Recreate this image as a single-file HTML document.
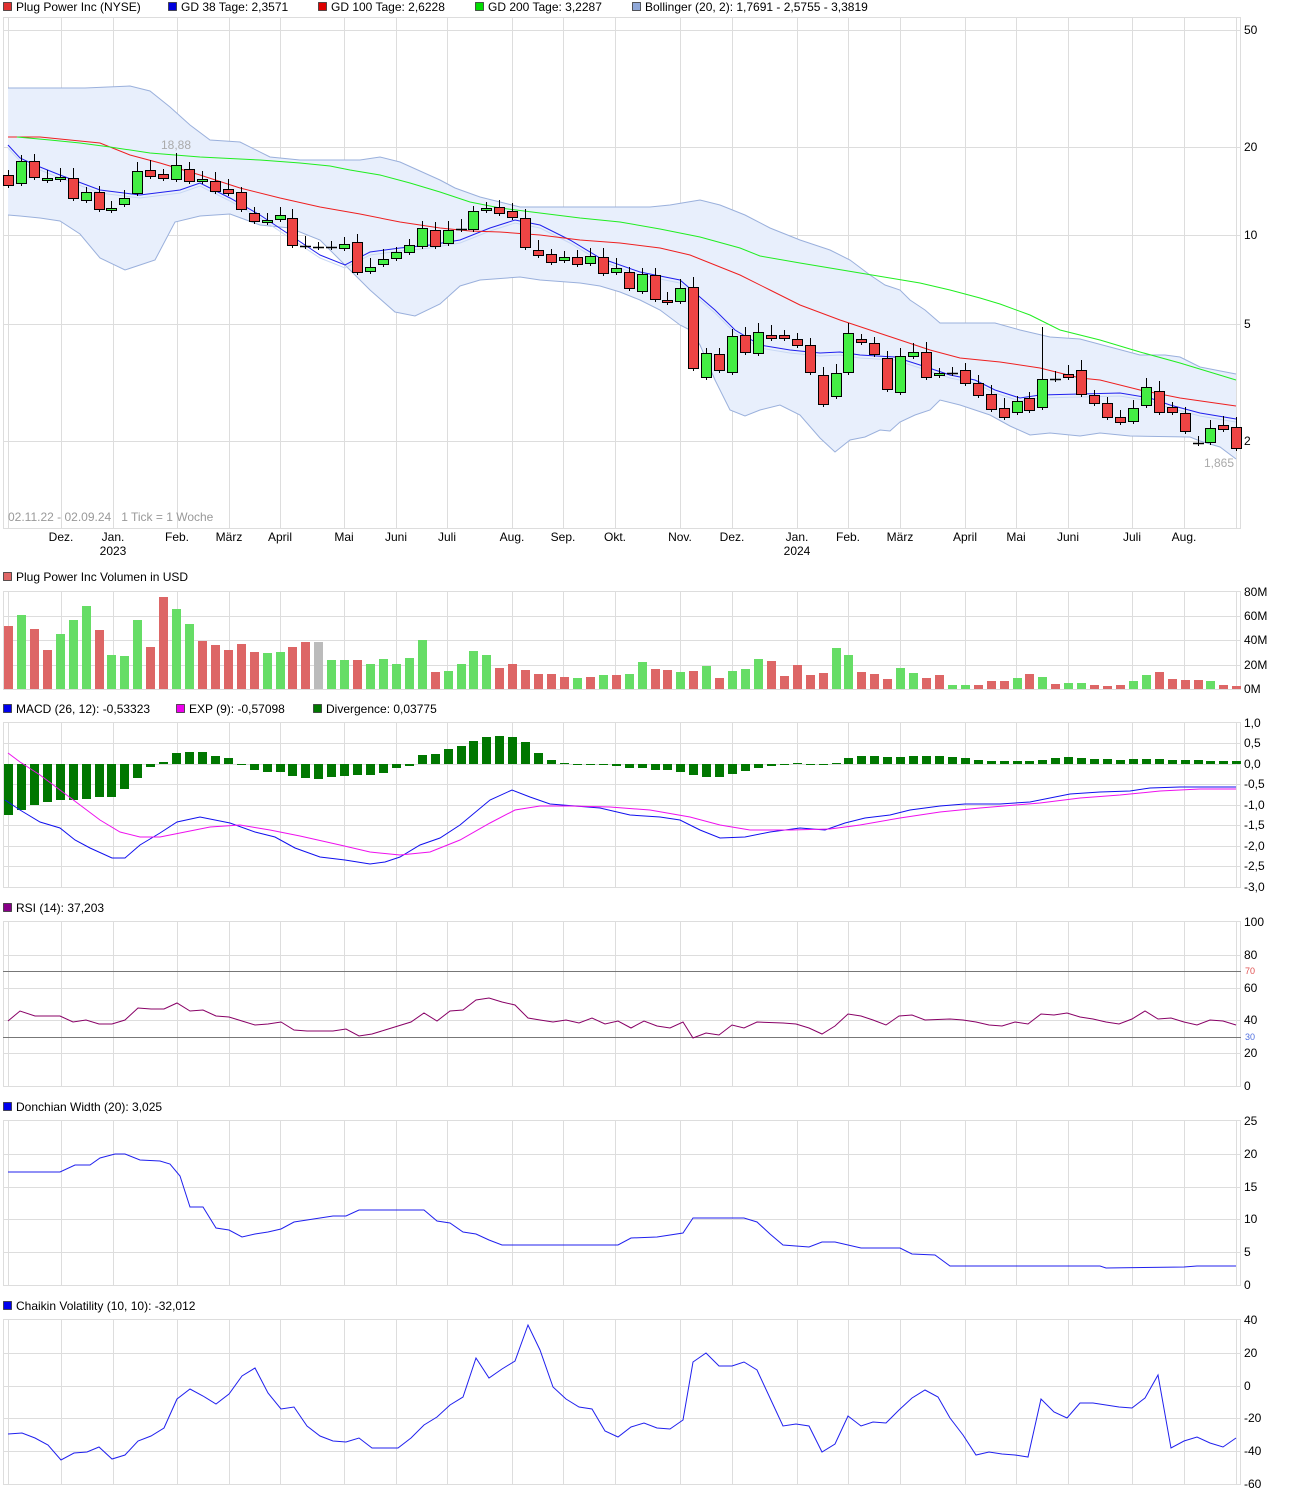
<!DOCTYPE html>
<html><head><meta charset="utf-8"><style>
html,body{margin:0;padding:0;background:#fff}
svg{display:block}
text{font-family:"Liberation Sans",sans-serif;font-size:12px;fill:#000;white-space:pre}
</style></head><body>
<svg id="s" width="1292" height="1498" xmlns="http://www.w3.org/2000/svg"></svg>
<script>
const S=document.getElementById('s');let h='';
const X0=8,DX=12.93;const cx=i=>X0+i*DX;
const vg=[8,61,113,177,229,280,344,396,447,512,563,615,680,732,797,848,900,965,1016,1068,1132,1184,1236];
function panel(y1,y2,hl,labels){
 h+=`<rect x="3.5" y="${y1+.5}" width="1237" height="${y2-y1}" fill="#fff" stroke="#ddd"/>`;
 vg.forEach(x=>h+=`<line x1="${x+.5}" y1="${y1}" x2="${x+.5}" y2="${y2}" stroke="#ddd"/>`);
 hl.forEach(y=>h+=`<line x1="3" y1="${y+.5}" x2="1241" y2="${y+.5}" stroke="#ddd"/>`);
 labels.forEach(([y,t])=>h+=`<text x="1244" y="${y+4}">${t}</text>`);
}
function leg(y,items){let x=3;items.forEach(([c,t,w])=>{h+=`<rect x="${x+.5}" y="${y-8.5}" width="8" height="8" fill="${c}" stroke="#333" stroke-width=".8"/><text x="${x+13}" y="${y}">${t}</text>`;x+=w;});}
function pl(pts,c,w){h+=`<polyline fill="none" stroke="${c}" stroke-width="${w||1}" points="${pts.map(p=>p.join(',')).join(' ')}"/>`;}
// main
leg(11,[["#e03030","Plug Power Inc (NYSE)",165],["#0000dd","GD 38 Tage: 2,3571",150],["#dd0000","GD 100 Tage: 2,6228",157],["#00dd00","GD 200 Tage: 3,2287",157],["#90a8d8","Bollinger (20, 2): 1,7691 - 2,5755 - 3,3819",300]]);
panel(17,528,[30,147,235,324,441],[[30,"50"],[147,"20"],[235,"10"],[324,"5"],[441,"2"]]);
const up=[[8,88],[60,88],[85,88],[130,86],[150,91],[170,107],[190,125],[210,140],[240,142],[270,157],[300,160],[360,160],[380,157],[400,162],[420,171],[440,180],[455,188],[480,197],[520,207],[650,207],[670,205],[700,200],[720,205],[745,215],[770,228],[800,240],[830,250],[850,260],[870,275],[885,285],[900,290],[910,300],[925,310],[940,323],[995,323],[1020,330],[1050,337],[1080,339],[1110,347],[1140,355],[1165,355],[1180,357],[1200,367],[1236,374]];
const lo=[[8,215],[20,216],[40,218],[60,221],[80,234],[100,258],[125,270],[140,265],[155,260],[175,222],[200,216],[230,214],[260,225],[290,228],[320,240],[345,265],[370,290],[395,312],[415,316],[440,304],[460,286],[480,280],[520,277],[540,280],[580,283],[600,286],[620,292],[640,300],[660,310],[680,325],[690,330],[700,345],[715,380],[730,410],[745,416],[760,410],[780,405],[800,415],[820,438],[835,452],[850,440],[865,437],[880,430],[890,431],[900,422],[915,415],[930,410],[940,400],[960,405],[990,415],[1010,426],[1030,435],[1050,433],[1080,436],[1100,433],[1130,436],[1190,437],[1200,441],[1220,447],[1236,459]];
h+=`<polygon fill="#e8effc" points="${up.concat(lo.slice().reverse()).map(p=>p.join(',')).join(' ')}"/>`;
pl(up,"#9ab0dc");pl(lo,"#9ab0dc");
const blue=[[8,145],[20,158],[35,165],[60,175],[100,190],[140,195],[180,190],[200,183],[230,198],[260,215],[290,235],[320,255],[345,265],[370,252],[400,248],[430,245],[460,240],[490,228],[515,220],[540,225],[570,240],[600,258],[640,272],[680,280],[715,310],[735,330],[760,345],[790,350],[820,353],[840,352],[860,355],[895,357],[920,365],[950,375],[975,380],[995,390],[1020,398],[1040,395],[1080,394],[1120,393],[1150,398],[1170,405],[1200,413],[1236,419]];
pl(blue.map(p=>[p[0],p[1]+3]),"#c8d8f4");
pl(blue,"#2020ee");
pl([[8,137],[40,137],[70,140],[100,143],[130,155],[160,163],[200,175],[240,188],[280,198],[320,207],[360,214],[400,222],[440,228],[470,231],[500,232],[540,235],[580,240],[620,243],[660,248],[690,255],[715,265],[740,275],[770,290],[800,305],[840,320],[870,330],[900,340],[930,350],[960,358],[1000,362],[1040,368],[1080,378],[1100,380],[1140,390],[1180,398],[1236,406]],"#ee2020");
pl([[17,137],[50,140],[80,143],[110,147],[150,153],[200,157],[260,160],[300,163],[330,166],[350,170],[380,175],[410,183],[440,192],[470,202],[500,208],[540,213],[580,218],[620,222],[660,229],[700,237],[740,248],[760,256],[800,263],[830,268],[860,273],[890,278],[920,283],[950,290],[980,298],[1000,304],[1030,315],[1060,330],[1100,340],[1140,352],[1180,363],[1236,380]],"#20ee20");
const C=[["r",175,185],["g",161,183],["r",161,177],["g",178,180],["g",177,179],["r",178,198],["g",192,200],["r",192,209],["g",208,210],["g",198,204],["g",171,193],["r",170,176],["r",174,178],["g",165,179],["r",169,181],["g",179,181],["r",181,191],["r",189,193],["r",192,209],["r",213,221],["g",220,222],["g",215,219],["r",218,245],["k",246,246],["k",247,247],["k",247,247],["g",244,248],["r",242,272],["g",267,271],["g",259,264],["g",252,258],["g",245,252],["g",228,246],["r",230,246],["g",230,243],["k",229,229],["g",211,229],["g",208,210],["r",207,213],["r",211,217],["r",218,247],["r",250,255],["r",254,262],["g",257,260],["r",257,264],["g",256,263],["r",257,273],["g",268,272],["r",272,288],["g",274,291],["r",275,299],["r",300,302],["g",288,301],["r",287,368],["g",353,377],["r",354,370],["g",336,372],["r",335,352],["g",332,353],["r",335,338],["r",335,338],["r",339,345],["r",345,372],["r",375,404],["g",373,396],["g",333,372],["r",339,342],["r",343,354],["r",358,389],["g",356,392],["g",352,356],["r",352,377],["g",373,375],["k",373,373],["r",370,383],["r",383,395],["r",394,409],["r",408,417],["g",401,412],["r",398,410],["g",379,407],["k",379,379],["r",374,377],["r",370,394],["r",395,403],["r",403,417],["r",417,422],["g",408,421],["g",387,405],["r",391,412],["r",407,412],["r",413,431],["k",443,443],["g",428,442],["r",425,429],["r",427,448]];
C.forEach((c,i)=>{const x=Math.round(cx(i));const t=c[1],b=c[2];const wt=t-5-((i*7)%6),wb=b+3+((i*5)%5);
 h+=`<line x1="${x+.5}" y1="${i==13?153:i==80?327:wt}" x2="${x+.5}" y2="${wb}" stroke="#000"/>`;
 if(c[0]=="k")h+=`<line x1="${x-5}" y1="${t+.5}" x2="${x+6}" y2="${t+.5}" stroke="#000" stroke-width="1.5"/>`;
 else h+=`<rect x="${x-4.5}" y="${t+.5}" width="10" height="${Math.max(b-t,2)}" fill="${c[0]=="r"?"#ee4444":"#44ee44"}" stroke="#000"/>`;});
h+=`<text x="161" y="149" style="fill:#aaa">18,88</text><text x="1204" y="467" style="fill:#aaa">1,865</text>`;
h+=`<text x="8" y="521" style="fill:#999">02.11.22 - 02.09.24   1 Tick = 1 Woche</text>`;
[[61,"Dez."],[113,"Jan."],[177,"Feb."],[229,"März"],[280,"April"],[344,"Mai"],[396,"Juni"],[447,"Juli"],[512,"Aug."],[563,"Sep."],[615,"Okt."],[680,"Nov."],[732,"Dez."],[797,"Jan."],[848,"Feb."],[900,"März"],[965,"April"],[1016,"Mai"],[1068,"Juni"],[1132,"Juli"],[1184,"Aug."]].forEach(([x,t])=>h+=`<text x="${x}" y="541" text-anchor="middle">${t}</text>`);
h+=`<text x="113" y="555" text-anchor="middle">2023</text><text x="797" y="555" text-anchor="middle">2024</text>`;
// volume
leg(581,[["#e06666","Plug Power Inc Volumen in USD",300]]);
panel(591,689,[616,640,665],[[592,"80M"],[616,"60M"],[640,"40M"],[665,"20M"],[689,"0M"]]);
const V="r626 g615 r629 r650 g634 g620 g606 r630 g655 g656 g620 r647 r597 g609 g624 r641 r645 r650 r644 r652 g653 g652 r647 r642 a642 g660 g660 r660 g664 g659 g664 g658 g640 r672 g671 g664 g651 g655 r668 r664 r670 r674 r674 r677 g678 r677 g675 r675 g674 g662 r669 r670 g672 r671 g666 r678 g671 g669 g659 r661 r676 r665 r675 r673 g648 g655 r672 r674 r679 g668 g673 r678 r675 g685 g685 r685 r681 r681 g678 r674 g677 r684 g683 g683 r685 r686 r685 g681 g675 r672 r679 r680 r680 g681 r685 r686".split(' ');
V.forEach((v,i)=>{const x=Math.round(cx(i));const y=+v.slice(1);h+=`<rect x="${x-4}" y="${y}" width="9" height="${689-y}" fill="${v[0]=="r"?"#dd6666":v[0]=="g"?"#66dd66":"#bbbbbb"}"/>`;});
// MACD
leg(713,[["#0000ee","MACD (26, 12): -0,53323",173],["#ee00ee","EXP (9): -0,57098",137],["#007700","Divergence: 0,03775",150]]);
panel(722,887,[743,764,784,805,825,846,866],[[723,"1,0"],[743,"0,5"],[764,"0,0"],[784,"-0,5"],[805,"-1,0"],[825,"-1,5"],[846,"-2,0"],[866,"-2,5"],[887,"-3,0"]]);
const M=[815,810,805,802,800,800,799,797,797,789,778,767,762,753,752,752,756,758,764,770,772,772,776,778,779,777,776,775,775,773,768,766,755,754,749,746,741,737,736,737,742,753,760,763,765,765,765,766,768,768,770,770,772,775,777,777,774,771,768,766,765,763,764,765,763,758,756,756,757,757,756,756,756,757,758,760,761,761,761,761,760,758,757,758,759,759,760,759,759,759,760,760,760,761,761,761];
M.forEach((y,i)=>{const x=Math.round(cx(i))-4;const a=Math.min(y,764),b=Math.max(y,764);h+=`<rect x="${x}" y="${a}" width="9" height="${Math.max(b-a,1)}" fill="#007700"/>`;});
pl([[5,800],[20,810],[40,822],[60,828],[75,840],[90,848],[112,858],[125,858],[140,845],[160,833],[177,822],[200,817],[230,823],[255,832],[275,837],[295,848],[320,857],[345,860],[370,864],[385,862],[400,857],[420,845],[440,838],[460,825],[490,800],[512,790],[530,797],[550,804],[575,806],[600,808],[630,815],[660,817],[680,820],[700,830],[720,838],[745,837],[770,832],[800,828],[825,830],[845,823],[865,818],[890,815],[910,810],[940,806],[965,804],[1000,804],[1030,802],[1070,794],[1100,792],[1130,791],[1150,788],[1180,787],[1236,787]],"#1010ee");
pl([[8,753],[20,762],[40,775],[60,790],[80,805],[100,820],[120,832],[140,837],[160,837],[180,833],[210,827],[240,825],[270,830],[300,836],[340,845],[370,852],[400,855],[430,852],[460,840],[490,823],[515,810],[540,806],[570,806],[610,807],[650,810],[690,817],[720,825],[750,830],[790,830],[830,829],[860,825],[900,818],[940,812],[980,808],[1040,803],[1080,798],[1120,795],[1160,791],[1200,789],[1236,789]],"#ee10ee");
// RSI
leg(912,[["#880088","RSI (14): 37,203",150]]);
panel(921,1086,[955,988,1020,1053],[[922,"100"],[955,"80"],[988,"60"],[1020,"40"],[1053,"20"],[1086,"0"]]);
h+=`<line x1="3" y1="971.5" x2="1241" y2="971.5" stroke="#777"/><line x1="3" y1="1037.5" x2="1241" y2="1037.5" stroke="#777"/>`;
h+=`<text x="1245" y="974" style="fill:#e05050;font-size:9px">70</text><text x="1245" y="1040" style="fill:#5070e0;font-size:9px">30</text>`;
pl([[8,1021],[20,1011],[35,1016],[60,1016],[73,1022],[86,1020],[99,1024],[112,1024],[125,1020],[138,1008],[151,1009],[164,1009],[177,1003],[190,1011],[203,1010],[216,1016],[229,1017],[242,1021],[255,1025],[268,1024],[281,1022],[294,1030],[307,1031],[333,1031],[346,1029],[359,1036],[372,1034],[385,1030],[398,1026],[411,1022],[424,1013],[437,1021],[450,1011],[463,1010],[476,1000],[489,998],[502,1002],[515,1005],[528,1018],[540,1020],[553,1022],[566,1020],[579,1023],[592,1018],[605,1024],[618,1021],[631,1028],[644,1021],[657,1026],[670,1028],[683,1022],[693,1038],[706,1033],[719,1035],[732,1025],[744,1028],[757,1022],[783,1023],[796,1024],[809,1028],[822,1034],[835,1026],[848,1014],[861,1016],[873,1020],[886,1025],[899,1016],[912,1015],[925,1020],[950,1019],[963,1020],[976,1022],[989,1025],[1002,1026],[1015,1022],[1028,1024],[1041,1014],[1054,1015],[1067,1013],[1080,1017],[1093,1019],[1106,1022],[1119,1024],[1132,1019],[1145,1011],[1158,1019],[1171,1018],[1184,1022],[1197,1025],[1210,1020],[1223,1021],[1236,1025]],"#880066");
// Donchian
leg(1111,[["#0000ee","Donchian Width (20): 3,025",200]]);
panel(1120,1285,[1154,1187,1219,1252],[[1121,"25"],[1154,"20"],[1187,"15"],[1219,"10"],[1252,"5"],[1285,"0"]]);
pl([[8,1172],[60,1172],[75,1165],[90,1165],[100,1158],[115,1154],[125,1154],[140,1160],[160,1161],[170,1164],[180,1176],[190,1207],[203,1207],[216,1228],[229,1230],[242,1237],[255,1234],[268,1232],[281,1229],[294,1222],[307,1220],[333,1216],[346,1216],[359,1210],[424,1210],[437,1221],[450,1223],[463,1232],[476,1234],[489,1240],[502,1245],[618,1245],[631,1238],[657,1237],[683,1233],[693,1218],[744,1218],[757,1222],[770,1234],[783,1245],[809,1247],[822,1242],[835,1242],[848,1245],[861,1248],[900,1248],[912,1254],[935,1255],[950,1266],[1100,1266],[1106,1268],[1184,1267],[1197,1266],[1236,1266]],"#2020ee");
// Chaikin
leg(1310,[["#0000ee","Chaikin Volatility (10, 10): -32,012",250]]);
panel(1319,1484,[1353,1386,1418,1451],[[1320,"40"],[1353,"20"],[1386,"0"],[1418,"-20"],[1451,"-40"],[1484,"-60"]]);
pl([[8,1434],[22,1433],[35,1438],[48,1445],[61,1460],[74,1453],[87,1452],[99,1447],[112,1459],[125,1455],[138,1441],[151,1436],[164,1428],[177,1399],[190,1389],[203,1396],[216,1404],[229,1394],[242,1376],[255,1368],[268,1393],[281,1409],[294,1407],[307,1426],[320,1436],[333,1441],[346,1442],[359,1438],[372,1448],[398,1448],[411,1438],[424,1425],[437,1417],[450,1405],[463,1397],[476,1358],[489,1378],[502,1369],[515,1361],[528,1325],[540,1350],[553,1387],[566,1399],[579,1407],[592,1409],[605,1431],[618,1437],[631,1427],[644,1423],[657,1428],[670,1429],[683,1420],[693,1362],[706,1353],[719,1366],[732,1366],[744,1362],[757,1370],[770,1398],[783,1426],[796,1424],[809,1426],[822,1452],[835,1444],[848,1416],[861,1426],[873,1422],[886,1423],[899,1410],[912,1398],[925,1390],[938,1397],[950,1418],[963,1435],[976,1455],[989,1452],[1002,1454],[1015,1455],[1028,1457],[1041,1399],[1054,1412],[1067,1418],[1080,1403],[1093,1403],[1106,1405],[1119,1407],[1132,1408],[1145,1398],[1158,1375],[1171,1448],[1184,1441],[1197,1437],[1210,1443],[1223,1447],[1236,1438]],"#2020ee");
S.innerHTML=h;
</script>
</body></html>
